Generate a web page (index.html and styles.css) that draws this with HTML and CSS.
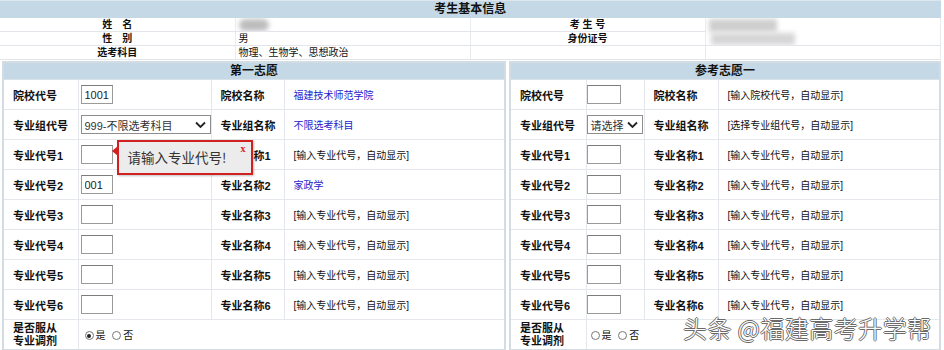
FILE: index.html
```html
<!DOCTYPE html>
<html lang="zh-CN">
<head>
  <meta charset="UTF-8">
  <title>考生志愿填报</title>
  <link rel="stylesheet" href="styles.css">
</head>
<body>
<table class="info">
  <colgroup><col class="c1"><col class="c2"><col class="c3"><col class="c4"></colgroup>
  <tr><th colspan="4" class="title">考生基本信息</th></tr>
  <tr><td class="lb">姓　名</td><td class="pcell"><span class="blur name"></span></td><td class="lb">考 生 号</td><td rowspan="2" class="pcell"><span class="blur num1"></span><span class="blur num2"></span></td></tr>
  <tr><td class="lb">性　别</td><td>男</td><td class="lb">身份证号</td></tr>
  <tr><td class="lb">选考科目</td><td>物理、生物学、思想政治</td><td></td><td></td></tr>
</table>

<div class="wrap">
  <table class="panel left">
    <colgroup><col style="width:75px"><col style="width:133px"><col style="width:73px"><col></colgroup>
    <tr><th colspan="4" class="head">第一志愿</th></tr>
    <tr><td class="lb">院校代号</td><td><input class="code" value="1001"></td><td class="lb">院校名称</td><td class="blue">福建技术师范学院</td></tr>
    <tr><td class="lb">专业组代号</td><td><div class="select wide"><span>999-不限选考科目</span><svg width="11" height="8" viewBox="0 0 11 8"><path d="M1 1.5 L5.5 6 L10 1.5" fill="none" stroke="#222" stroke-width="1.8"/></svg></div></td><td class="lb">专业组名称</td><td class="blue">不限选考科目</td></tr>
    <tr><td class="lb">专业代号1</td><td class="tipcell"><input class="code" value="">
      <div class="tip"><span class="arrow"></span>请输入专业代号!<span class="close">x</span></div></td><td class="lb">专业名称1</td><td>[输入专业代号，自动显示]</td></tr>
    <tr><td class="lb">专业代号2</td><td><input class="code" value="001"></td><td class="lb">专业名称2</td><td class="blue">家政学</td></tr>
    <tr><td class="lb">专业代号3</td><td><input class="code"></td><td class="lb">专业名称3</td><td>[输入专业代号，自动显示]</td></tr>
    <tr><td class="lb">专业代号4</td><td><input class="code"></td><td class="lb">专业名称4</td><td>[输入专业代号，自动显示]</td></tr>
    <tr><td class="lb">专业代号5</td><td><input class="code"></td><td class="lb">专业名称5</td><td>[输入专业代号，自动显示]</td></tr>
    <tr><td class="lb">专业代号6</td><td><input class="code"></td><td class="lb">专业名称6</td><td>[输入专业代号，自动显示]</td></tr>
    <tr><td class="lb two">是否服从<br>专业调剂</td><td colspan="3"><span class="radio on"></span>是 <span class="radio"></span>否</td></tr>
  </table>

  <table class="panel right">
    <colgroup><col style="width:76px"><col style="width:58px"><col style="width:74px"><col></colgroup>
    <tr><th colspan="4" class="head">参考志愿一</th></tr>
    <tr><td class="lb">院校代号</td><td><input class="code" value=""></td><td class="lb">院校名称</td><td>[输入院校代号，自动显示]</td></tr>
    <tr><td class="lb">专业组代号</td><td><div class="select small"><span>请选择</span><svg width="11" height="8" viewBox="0 0 11 8"><path d="M1 1.5 L5.5 6 L10 1.5" fill="none" stroke="#222" stroke-width="1.8"/></svg></div></td><td class="lb">专业组名称</td><td>[选择专业组代号，自动显示]</td></tr>
    <tr><td class="lb">专业代号1</td><td><input class="code"></td><td class="lb">专业名称1</td><td>[输入专业代号，自动显示]</td></tr>
    <tr><td class="lb">专业代号2</td><td><input class="code"></td><td class="lb">专业名称2</td><td>[输入专业代号，自动显示]</td></tr>
    <tr><td class="lb">专业代号3</td><td><input class="code"></td><td class="lb">专业名称3</td><td>[输入专业代号，自动显示]</td></tr>
    <tr><td class="lb">专业代号4</td><td><input class="code"></td><td class="lb">专业名称4</td><td>[输入专业代号，自动显示]</td></tr>
    <tr><td class="lb">专业代号5</td><td><input class="code"></td><td class="lb">专业名称5</td><td>[输入专业代号，自动显示]</td></tr>
    <tr><td class="lb">专业代号6</td><td><input class="code"></td><td class="lb">专业名称6</td><td>[输入专业代号，自动显示]</td></tr>
    <tr><td class="lb two">是否服从<br>专业调剂</td><td colspan="3"><span class="radio"></span>是 <span class="radio"></span>否</td></tr>
  </table>
</div>

<div class="mark">头条 @福建高考升学帮</div>
</body>
</html>
```

FILE: styles.css
```css
body {
  margin: 0;
  font-family: "Liberation Sans", "Noto Sans CJK SC", sans-serif;
  font-size: 10px;
  color: #111;
  background: #fff;
  width: 944px;
  height: 350px;
  overflow: hidden;
  position: relative;
}

/* basic info */
.info {
  width: 941px;
  border-collapse: collapse;
  table-layout: fixed;
}
.info .c1, .info .c2, .info .c3 { width: 235px; }
.info th.title {
  background: #c4d8e6;
  height: 17px;
  padding: 0;
  font-size: 12px;
  line-height: 17px;
  border-top: 1px solid #dde6ee;
}
.info td {
  height: 13px;
  padding: 0 0 0 3px;
  font-size: 10px;
  line-height: 13px;
  border-bottom: 1px solid #e2e6ea;
  border-right: 1px solid #e8ecef;
  white-space: nowrap;
  overflow: hidden;
}
.info td.lb {
  text-align: center;
  font-weight: bold;
  padding: 0;
}
.info td.pcell { position: relative; vertical-align: top; }

/* blurred personal data */
.blur {
  position: absolute;
  background: #bdbdbd;
  filter: blur(2.5px);
}
.blur.name { left: 3px; top: 1px; width: 30px; height: 12px; border-radius: 7px; }
.blur.num1 { left: 3px; top: 1px; width: 68px; height: 13px; background: #cfcfcf; }
.blur.num2 { left: 5px; top: 15px; width: 84px; height: 12px; background: #d6d6d6; }

/* panels */
.wrap {
  display: flex;
  gap: 3px;
  padding-left: 2px;
  margin-top: 1px;
}
.panel {
  border-collapse: collapse;
  table-layout: fixed;
  border: 2px solid #d3dce3;
}
.panel.left { width: 504px; }
.panel.right { width: 432px; }
.panel th.head {
  background: #c4d8e6;
  height: 16px;
  padding: 0;
  font-size: 12px;
  line-height: 16px;
  border-bottom: 1px solid #d9e2e9;
}
.panel td {
  height: 29px;
  padding: 0 0 0 9px;
  border-bottom: 1px solid #e4e8ec;
  border-right: 1px solid #e4e8ec;
  white-space: nowrap;
}
.panel td.lb {
  font-weight: bold;
  font-size: 11px;
  padding-left: 9px;
}
.panel td.two { line-height: 13px; }
.panel td:nth-child(2) { padding-left: 2px; }
.panel.right td:nth-child(2) { padding-left: 0; }
.panel.right input.code { width: 34px; }
.blue { color: #2222cc; }

input.code {
  width: 32px;
  height: 19px;
  box-sizing: border-box;
  border: 1px solid #9a9a9a;
  border-top-color: #7c7c7c;
  padding: 0 3px;
  font-family: "Liberation Sans", sans-serif;
  font-size: 11px;
  color: #222;
  vertical-align: middle;
  margin: 0;
}
.select {
  display: flex;
  align-items: center;
  justify-content: space-between;
  height: 19px;
  box-sizing: border-box;
  border: 1px solid #8e8e8e;
  padding: 0 4px 0 3px;
  font-size: 11px;
  color: #333;
}
.select.wide { width: 130px; }
.select.small { width: 56px; }

.tipcell { position: relative; }
.tip {
  position: absolute;
  left: 38px;
  top: 0;
  width: 123px;
  height: 31px;
  border: 2px solid #d02020;
  background: #ececec;
  box-shadow: 1px 1px 2px rgba(0,0,0,0.25);
  font-size: 13.5px;
  color: #333;
  line-height: 31px;
  padding-left: 9px;
  box-sizing: content-box;
  z-index: 2;
  font-family: "Noto Sans CJK SC", sans-serif;
}
.tip .arrow {
  position: absolute;
  left: -7px;
  top: 4px;
  width: 0;
  height: 0;
  border-top: 5px solid transparent;
  border-bottom: 5px solid transparent;
  border-right: 6px solid #d02020;
}
.tip .close {
  position: absolute;
  right: 5px;
  top: -9px;
  color: #e02020;
  font-weight: bold;
  font-size: 10px;
  font-family: "Liberation Serif", serif;
}

.radio {
  display: inline-block;
  width: 9px;
  height: 9px;
  border: 1px solid #777;
  border-radius: 50%;
  vertical-align: -1px;
  margin: 0 2px 0 4px;
  box-sizing: border-box;
  background: #fff;
  position: relative;
}
.radio.on::after {
  content: "";
  position: absolute;
  left: 1.5px;
  top: 1.5px;
  width: 4px;
  height: 4px;
  border-radius: 50%;
  background: #222;
}

.mark {
  position: absolute;
  left: 683px;
  top: 310px;
  font-family: "Noto Sans CJK SC", sans-serif;
  font-size: 24px;
  font-weight: 300;
  color: #fff;
  letter-spacing: 0.5px;
  text-shadow: -1px 0 #6a6a6a, 1px 0 #6a6a6a, 0 -1px #6a6a6a, 0 1px #6a6a6a;
  white-space: nowrap;
}
```
